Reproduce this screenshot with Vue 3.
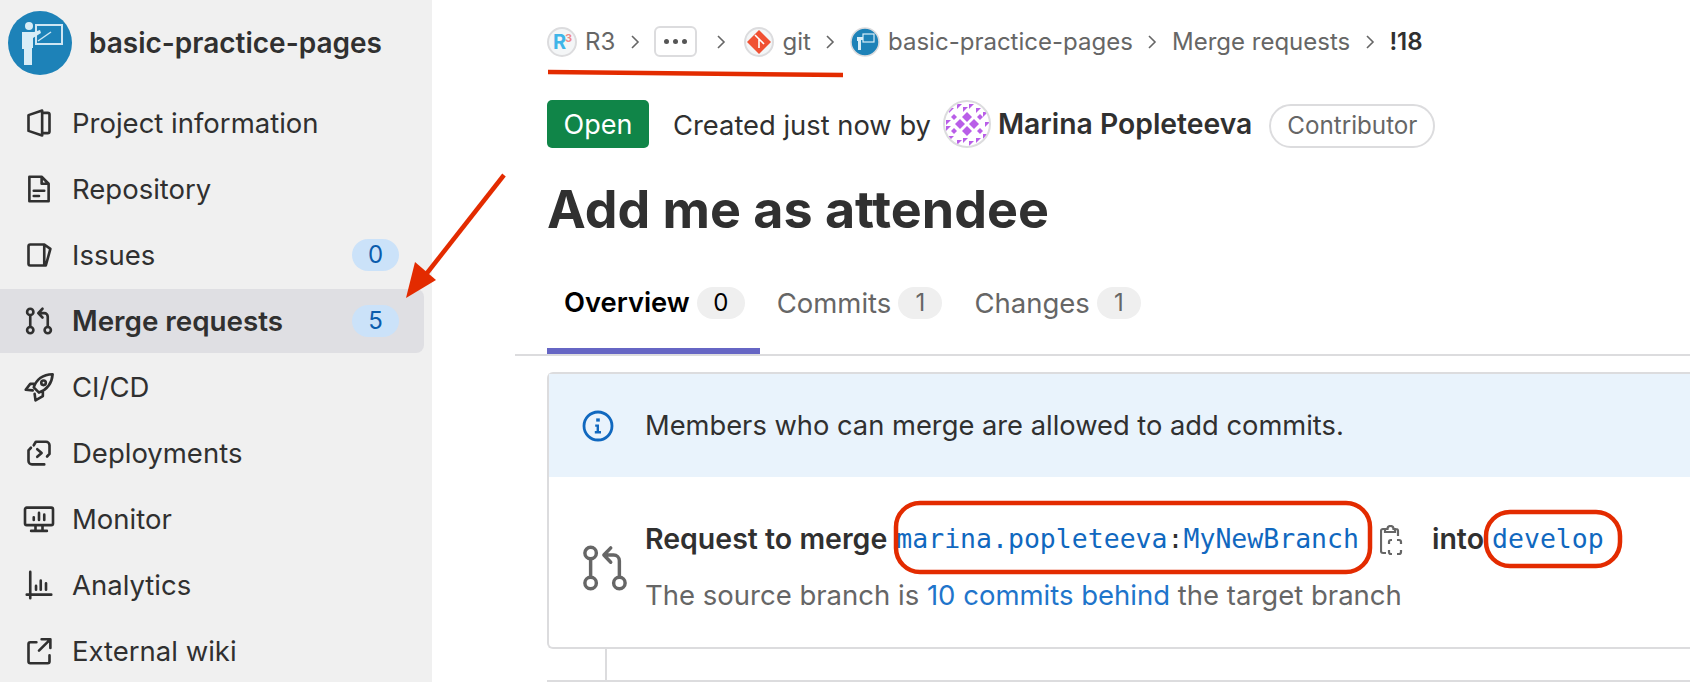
<template>
  <div class="page">
    <aside class="sidebar">
      <div class="project">
        <svg class="project-logo" viewBox="0 0 64 64">
          <circle cx="32" cy="32" r="32" fill="#1d82b8" />
          <rect x="28" y="14" width="26" height="19" fill="none" stroke="#cfe6f3" stroke-width="2" />
          <path d="M30 30 L43 21" stroke="#cfe6f3" stroke-width="1.5" />
          <circle cx="21" cy="15" r="4" fill="#d8edf7" />
          <path d="M14 21h12l6-2 1 3-8 5v10h-1v17h-8V38h-2z" fill="#d8edf7" />
        </svg>
        <span class="project-name">basic-practice-pages</span>
      </div>
      <a v-for="item in navItems" :key="item.label" class="nav-item" :class="{ active: item.active }">
        <svg class="nav-icon" viewBox="0 0 16 16">
          <path :d="item.icon" />
          <circle v-for="(c, i) in item.circles" :key="i" :cx="c[0]" :cy="c[1]" :r="c[2]" />
        </svg>
        <span class="nav-label">{{ item.label }}</span>
        <span v-if="item.count !== undefined" class="nav-count">{{ item.count }}</span>
      </a>
    </aside>

    <main class="main">
      <nav class="crumbs">
        <span class="crumb">
          <svg class="crumb-avatar" viewBox="0 0 30 30">
            <circle cx="15" cy="15" r="14" fill="#f4f6f7" stroke="#dcdcde" stroke-width="2" />
            <text x="6" y="22" class="r3-r">R</text>
            <text x="18" y="15" class="r3-3">3</text>
          </svg>
          R3
        </span>
        <svg class="chev" viewBox="0 0 10 16"><path d="M2 2l6 6-6 6" /></svg>
        <span class="more"><i></i><i></i><i></i></span>
        <svg class="chev chev-wide" viewBox="0 0 10 16"><path d="M2 2l6 6-6 6" /></svg>
        <span class="crumb">
          <svg class="crumb-avatar" viewBox="0 0 30 30">
            <circle cx="15" cy="15" r="14" fill="#f4f6f7" stroke="#dcdcde" stroke-width="2" />
            <path d="M15 3l12 12-12 12L3 15z" fill="#f05133" />
            <path d="M11 8l4 4v9M15 12l5 5" stroke="#fff" stroke-width="1.6" fill="none" />
          </svg>
          git
        </span>
        <svg class="chev" viewBox="0 0 10 16"><path d="M2 2l6 6-6 6" /></svg>
        <span class="crumb">
          <svg class="crumb-avatar" viewBox="0 0 30 30">
            <circle cx="15" cy="15" r="14" fill="#1d82b8" stroke="#dcdcde" stroke-width="1.5" />
            <rect x="13" y="7" width="11" height="8" fill="none" stroke="#d8edf7" stroke-width="1.2" />
            <path d="M7 10h6v3h-2v10H8V14H7z" fill="#d8edf7" />
          </svg>
          basic-practice-pages
        </span>
        <svg class="chev" viewBox="0 0 10 16"><path d="M2 2l6 6-6 6" /></svg>
        <span class="crumb">Merge requests</span>
        <svg class="chev" viewBox="0 0 10 16"><path d="M2 2l6 6-6 6" /></svg>
        <span class="crumb current">!18</span>
      </nav>

      <div class="meta">
        <span class="status">Open</span>
        <span class="created">Created just now by</span>
        <svg class="author-avatar" viewBox="0 0 48 48">
          <defs>
            <clipPath id="avatar-clip"><circle cx="24" cy="24" r="22" /></clipPath>
          </defs>
          <circle cx="24" cy="24" r="23" fill="#fff" stroke="#dcdcde" stroke-width="2" />
          <g clip-path="url(#avatar-clip)" fill="#b95ee8">
            <path v-for="d in avatarShapes" :key="d" :d="d" />
          </g>
        </svg>
        <strong class="author">Marina Popleteeva</strong>
        <span class="role">Contributor</span>
      </div>

      <h1 class="title">Add me as attendee</h1>

      <div class="tabs">
        <a v-for="tab in tabs" :key="tab.label" class="tab" :class="{ active: tab.active }">
          {{ tab.label }}
          <span class="tab-count">{{ tab.count }}</span>
        </a>
      </div>

      <section class="card">
        <div class="notice">
          <svg class="notice-icon" viewBox="0 0 16 16">
            <circle cx="8" cy="8" r="7" />
            <path class="dot" d="M7.1 4.2h1.8v1.6H7.1z" />
            <path class="bar" d="M6.6 7.2h1.9v3.3h1v1.2H6.4v-1.2h.9V8.4h-.7z" />
          </svg>
          <span>Members who can merge are allowed to add commits.</span>
        </div>
        <div class="request">
          <svg class="request-icon" viewBox="0 0 16 16">
            <circle cx="3" cy="2.8" r="2" />
            <circle cx="3" cy="13.2" r="2" />
            <circle cx="13" cy="13.2" r="2" />
            <path d="M3 4.8v6.4M13 11.2V5.5a2 2 0 0 0-2-2H8.2M10 1L7.6 3.5 10 6" />
          </svg>
          <div class="request-text">
            <div class="request-line">
              <strong>Request to merge</strong>
              <code class="branch source"><a>marina.popleteeva</a>:<a>MyNewBranch</a></code>
              <svg class="copy-icon" viewBox="0 0 24 32">
                <path d="M5 4H3a2 2 0 0 0-2 2v20a2 2 0 0 0 2 2h3M14 4h2a2 2 0 0 1 2 2v5M5 7V4h2.5a3 3 0 0 1 6 0H15v3z" />
                <path d="M9 19v-2a2 2 0 0 1 2-2h1M17 15h2a2 2 0 0 1 2 2v2M21 25v2a2 2 0 0 1-2 2h-2M12 29h-1a2 2 0 0 1-2-2v-2" />
              </svg>
              <strong class="into">into</strong>
              <code class="branch target"><a>develop</a></code>
            </div>
            <div class="behind">The source branch is <a>10 commits behind</a> the target branch</div>
          </div>
        </div>
      </section>
      <div class="timeline"></div>
    </main>

    <svg class="annotations" viewBox="0 0 1690 682">
      <path class="mark" d="M548 72L843 75" />
      <rect class="mark" x="896" y="503" width="474" height="69" rx="24" />
      <rect class="mark" x="1486" y="512" width="134" height="54" rx="24" />
      <path class="mark" d="M504 175L420 282" />
      <path class="mark-head" d="M406 298L415 262L436 280z" />
    </svg>
  </div>
</template>

<script setup>
const navItems = [
  {
    label: 'Project information',
    icon: 'M2 3.5L9.8.9v14.2L2 12.5zM9.8 2.2H13a1 1 0 0 1 1 1v9.6a1 1 0 0 1-1 1H9.8',
  },
  {
    label: 'Repository',
    icon: 'M2.5 1h7l4 4v10h-11zM9.5 1v4h4M5 9h6M5 12h3',
  },
  {
    label: 'Issues',
    icon: 'M3 2h8l3.5 2.5-2.6 9.5H3a1 1 0 0 1-1-1V3a1 1 0 0 1 1-1zM11 2v12',
    count: 0,
  },
  {
    label: 'Merge requests',
    icon: 'M3 4.8v6.4M13 11.2V5.5a2 2 0 0 0-2-2H8.2M10 1L7.6 3.5 10 6',
    circles: [[3, 2.8, 1.8], [3, 13.2, 1.8], [13, 13.2, 1.8]],
    count: 5,
    active: true,
  },
  {
    label: 'CI/CD',
    icon: 'M15.8.7C10.5.9 6.6 3.4 5 8.2l3 3c4.8-1.8 7.4-5.4 7.8-10.5zM5.6 6.2H3L.4 9.6l4 .3M10.2 10.6v2.6L6 15.6l-.5-3.7',
    circles: [[10.6, 5.6, 1.3]],
  },
  {
    label: 'Deployments',
    icon: 'M5 3.6L6.2 1.6H12a2 2 0 0 1 2 2V8.5M2 6.5v6a2 2 0 0 0 2 2h7M2 6.5L3.4 5M14 8.5L12.6 10M7 5.8L9.5 8 7 10.2',
  },
  {
    label: 'Monitor',
    icon: 'M1 1.5h14a1 1 0 0 1 1 1v8a1 1 0 0 1-1 1H1a1 1 0 0 1-1-1v-8a1 1 0 0 1 1-1zM5 7v1.5M8 4.5v4M11 5.5v3M3.5 14.8h9M6 11.5v3.3M10 11.5v3.3',
  },
  {
    label: 'Analytics',
    icon: 'M3 .5v15M1 13.5h14M6.3 8.5v2.2M9 5.5v5.2M12 7v3.7',
  },
  {
    label: 'External wiki',
    icon: 'M6.5 3H3a1 1 0 0 0-1 1v10a1 1 0 0 0 1 1h10a1 1 0 0 0 1-1v-3.5M9.5 1.3h5v5M14.3 1.5L8 7.8',
  },
]

const tabs = [
  { label: 'Overview', count: 0, active: true },
  { label: 'Commits', count: 1 },
  { label: 'Changes', count: 1 },
]

// identicon: four centre diamonds ringed by small triangles
const diamond = (x, y, r) => `M${x} ${y - r}L${x + r} ${y}L${x} ${y + r}L${x - r} ${y}z`
const avatarShapes = [
  diamond(24, 17, 5),
  diamond(17, 24, 5),
  diamond(31, 24, 5),
  diamond(24, 31, 5),
  diamond(11, 17, 3),
  diamond(37, 17, 3),
  diamond(11, 31, 3),
  diamond(37, 31, 3),
]
for (const [x, y] of [[6, 8], [14, 4], [20, 7], [26, 4], [33, 8], [40, 12], [3, 20], [42, 22], [3, 26], [6, 36], [14, 40], [20, 38], [26, 41], [33, 38], [40, 34]]) {
  avatarShapes.push(`M${x} ${y}h5l-5 5z`)
}
</script>

<style>
html, body {
  margin: 0;
  overflow: hidden;
  background: #fff;
}
</style>

<style scoped>
.page {
  position: relative;
  display: flex;
  width: 1690px;
  height: 682px;
  overflow: hidden;
  font-family: Inter, "Liberation Sans", sans-serif;
  color: #303030;
}

.sidebar {
  display: flex;
  flex-direction: column;
  flex: 0 0 432px;
  box-sizing: border-box;
  background: #f0f0f0;
  padding-right: 8px;
}

.project {
  display: flex;
  flex: none;
  align-items: center;
  gap: 17px;
  height: 90px;
  padding: 0 0 4px 8px;
  box-sizing: border-box;
}

.project-logo {
  width: 64px;
  height: 64px;
}

.project-name {
  font-size: 28px;
  font-weight: 600;
}

.nav-item {
  display: flex;
  flex: none;
  align-items: center;
  height: 64px;
  margin: 1px 0;
  padding: 0 25px;
  gap: 19px;
  border-radius: 0 8px 8px 0;
  font-size: 27.5px;
}

.nav-item.active {
  background: #dfdfe3;
  font-weight: 600;
  font-size: 27.8px;
}

.nav-icon {
  flex: none;
  width: 28px;
  height: 28px;
  overflow: visible;
  fill: none;
  stroke: #303030;
  stroke-width: 1.5;
  stroke-linejoin: round;
  stroke-linecap: round;
}

.nav-label {
  flex: 1;
}

.nav-count {
  width: 47px;
  height: 32px;
  border-radius: 16px;
  background: #cbe2f9;
  color: #0b5cad;
  font-size: 24px;
  font-weight: 400;
  line-height: 32px;
  text-align: center;
}

.main {
  flex: 1;
  min-width: 0;
  padding-left: 115px;
}

.crumbs {
  display: flex;
  align-items: center;
  height: 31px;
  margin-top: 26px;
  font-size: 24px;
  line-height: 32px;
  color: #666;
  white-space: nowrap;
}

.crumb {
  display: flex;
  align-items: center;
  gap: 8px;
}

.crumb-avatar {
  width: 30px;
  height: 30px;
}

.r3-r {
  font: 700 20px Inter, sans-serif;
  fill: #3fb5e8;
}

.r3-3 {
  font: 700 11px Inter, sans-serif;
  fill: #f08a8a;
}

.current {
  font-weight: 600;
  color: #303030;
}

.chev {
  flex: none;
  width: 10px;
  height: 16px;
  margin: 0 14.6px;
  fill: none;
  stroke: #666;
  stroke-width: 1.6;
}

.chev-wide {
  margin: 0 18.5px;
}

.more {
  display: flex;
  align-items: center;
  justify-content: center;
  gap: 4px;
  box-sizing: border-box;
  width: 43px;
  height: 31px;
  border: 2px solid #dcdcde;
  border-radius: 6px;
}

.more i {
  width: 5px;
  height: 5px;
  border-radius: 50%;
  background: #555;
}

.meta {
  display: flex;
  align-items: center;
  height: 48px;
  margin-top: 43px;
  font-size: 27.35px;
  white-space: nowrap;
}

.status {
  box-sizing: border-box;
  width: 102px;
  height: 48px;
  margin-right: 24px;
  border-radius: 5px;
  background: #108548;
  color: #fff;
  font-size: 27px;
  line-height: 50px;
  text-align: center;
}

.created {
  padding-top: 2px;
}

.author-avatar {
  width: 48px;
  height: 48px;
  margin: 0 7px 0 12px;
}

.author {
  font-size: 28.3px;
  font-weight: 600;
}

.role {
  box-sizing: border-box;
  height: 44px;
  margin: 3px 0 0 17px;
  padding: 0 16px;
  border: 2px solid #dcdcde;
  border-radius: 22px;
  color: #666;
  font-size: 24.2px;
  line-height: 40px;
}

.title {
  margin: 23px 0 0;
  font-size: 52px;
  line-height: 78px;
  font-weight: 700;
  white-space: nowrap;
}

.tabs {
  display: flex;
  height: 107px;
  margin-left: -32px;
  padding-left: 32px;
  box-sizing: border-box;
  border-bottom: 2px solid #dcdcde;
}

.tab {
  display: flex;
  align-items: center;
  gap: 7px;
  height: 105px;
  padding: 2px 15px 0 17px;
  box-sizing: border-box;
  color: #666;
  font-size: 27.5px;
  white-space: nowrap;
}

.tab.active {
  color: #000;
  font-weight: 600;
  font-size: 27.3px;
  box-shadow: inset 0 -6px 0 #6666c4;
}

.tab-count {
  min-width: 44px;
  height: 32px;
  padding: 0 2px;
  box-sizing: border-box;
  border-radius: 16px;
  background: #efefef;
  font-size: 24px;
  font-weight: 400;
  line-height: 32px;
  text-align: center;
}

.tab.active .tab-count {
  min-width: 48px;
}

.card {
  box-sizing: border-box;
  width: 1300px;
  height: 277px;
  margin-top: 16px;
  border: 2px solid #dcdcde;
  border-right: none;
  border-radius: 6px 0 0 6px;
}

.notice {
  display: flex;
  align-items: center;
  height: 103px;
  padding-left: 33px;
  gap: 31px;
  background: #e9f3fc;
  font-size: 27.3px;
}

.notice-icon {
  flex: none;
  width: 32px;
  height: 32px;
  fill: none;
  stroke: #1068bf;
  stroke-width: 1.4;
}

.notice-icon .dot,
.notice-icon .bar {
  fill: #1068bf;
  stroke: none;
}

.request {
  display: flex;
  align-items: center;
  height: 170px;
  padding-left: 33px;
  gap: 17px;
}

.request-icon {
  flex: none;
  width: 46px;
  height: 46px;
  margin-top: 12px;
  fill: none;
  stroke: #666;
  stroke-width: 1.2;
  stroke-linejoin: round;
  stroke-linecap: round;
}

.request-text {
  margin-top: 6px;
}

.request-line {
  display: flex;
  align-items: center;
  height: 40px;
  font-size: 28.5px;
  white-space: nowrap;
}

.request-line strong {
  font-weight: 600;
}

.branch {
  font-family: "DejaVu Sans Mono", monospace;
  font-size: 26.5px;
  color: #303030;
}

.branch a {
  color: #1068bf;
}

.source {
  margin-left: 9px;
}

.copy-icon {
  flex: none;
  width: 24px;
  height: 32px;
  margin: 4px 28px 0 21px;
  fill: none;
  stroke: #666;
  stroke-width: 2.2;
}

.target {
  margin-left: 8px;
}

.behind {
  margin-top: 19px;
  font-size: 27.5px;
  color: #666;
  white-space: nowrap;
}

.behind a {
  color: #1f75cb;
}

.timeline {
  box-sizing: border-box;
  width: 1300px;
  height: 33px;
  border-bottom: 2px solid #dcdcde;
  background: linear-gradient(#dcdcde, #dcdcde) 58px 0 / 2px 100% no-repeat;
}

.annotations {
  position: absolute;
  top: 0;
  left: 0;
  width: 1690px;
  height: 682px;
  pointer-events: none;
}

.mark {
  fill: none;
  stroke: #e32b00;
  stroke-width: 4.5;
}

.mark-head {
  fill: #e32b00;
}
</style>
